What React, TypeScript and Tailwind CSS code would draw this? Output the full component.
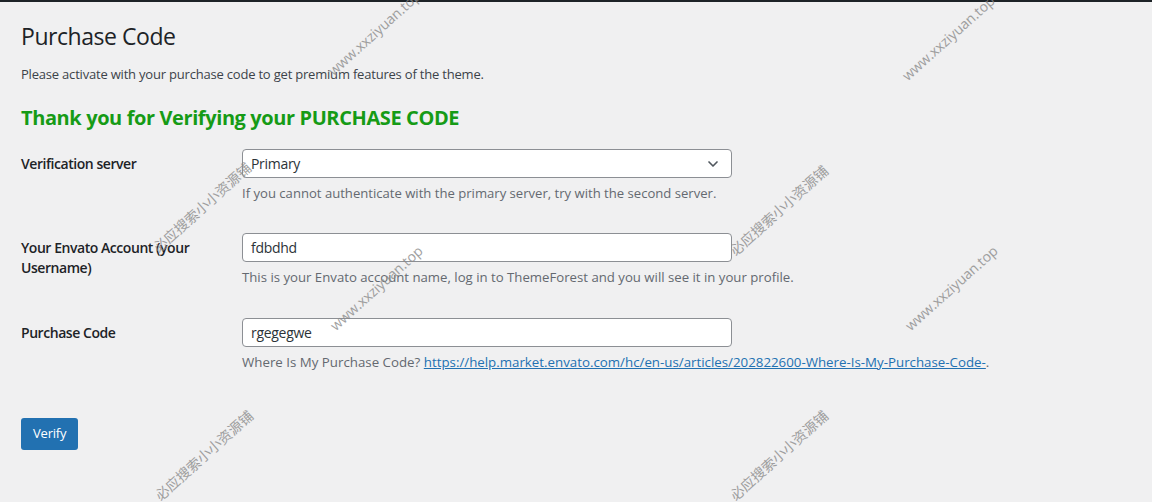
import { ChevronDown } from "lucide-react";

const marks = [
  { text: "www.xxziyuan.top", left: 330, top: 63 },
  { text: "www.xxziyuan.top", left: 904, top: 68 },
  { text: "必应搜索小小资源铺", left: 155, top: 240 },
  { text: "必应搜索小小资源铺", left: 732, top: 243 },
  { text: "www.xxziyuan.top", left: 332, top: 318 },
  { text: "www.xxziyuan.top", left: 907, top: 318 },
  { text: "必应搜索小小资源铺", left: 157, top: 488 },
  { text: "必应搜索小小资源铺", left: 732, top: 488 },
];

function Row({ label, children }: { label: React.ReactNode; children: React.ReactNode }) {
  return (
    <div className="grid grid-cols-[221px_490px] items-start">
      <div className="pt-[5px] pr-[20px] text-[14px] leading-[20px] font-semibold tracking-[-0.45px] text-[#1d2327]">
        {label}
      </div>
      <div>{children}</div>
    </div>
  );
}

function App() {
  return (
    <div
      className="relative w-[1152px] h-[502px] overflow-hidden bg-[#f0f0f1] text-[#3c434a]"
      style={{ fontFamily: '"Open Sans", "Noto Sans CJK SC", sans-serif' }}
    >
      <div className="h-[2px] bg-[#1d2327]" />

      <div className="px-[21px]">
        <h1 className="mt-[20px] text-[23px] leading-[29px] text-[#1d2327] tracking-[-0.45px]">Purchase Code</h1>
        <p className="mt-[14px] text-[13px] leading-[18px] tracking-[-0.2px]">
          Please activate with your purchase code to get premium features of the theme.
        </p>
        <h2 className="mt-[22px] text-[20px] leading-[26px] font-bold text-[#169b16] tracking-[-0.4px]">
          Thank you for Verifying your PURCHASE CODE
        </h2>

        <div className="mt-[18px] flex flex-col">
          <Row label="Verification server">
            <div className="flex h-[29px] items-center justify-between rounded-[4px] border border-[#8c8f94] bg-white pl-[8px] pr-[10px] text-[14px] tracking-[-0.3px] text-[#2c3338]">
              <span>Primary</span>
              <ChevronDown size={16} strokeWidth={2.5} className="text-[#50575e]" />
            </div>
            <p className="mt-[6px] whitespace-nowrap text-[13.1px] leading-[18px] text-[#646970]">
              If you cannot authenticate with the primary server, try with the second server.
            </p>
          </Row>

          <div className="mt-[31px]">
            <Row label={<>Your Envato Account (your<br />Username)</>}>
              <div className="flex h-[29px] items-center rounded-[4px] border border-[#8c8f94] bg-white px-[8px] text-[14px] tracking-[-0.3px] text-[#2c3338]">
                fdbdhd
              </div>
              <p className="mt-[6px] whitespace-nowrap text-[13.2px] leading-[18px] text-[#646970]">
                This is your Envato account name, log in to ThemeForest and you will see it in your profile.
              </p>
            </Row>
          </div>

          <div className="mt-[32px]">
            <Row label="Purchase Code">
              <div className="flex h-[29px] items-center rounded-[4px] border border-[#8c8f94] bg-white px-[8px] text-[14px] tracking-[-0.3px] text-[#2c3338]">
                rgegegwe
              </div>
              <p className="mt-[6px] whitespace-nowrap text-[13.3px] leading-[18px] text-[#646970]">
                Where Is My Purchase Code?{" "}
                <a href="#" className="text-[#2271b1] underline">
                  https://help.market.envato.com/hc/en-us/articles/202822600-Where-Is-My-Purchase-Code-
                </a>
                .
              </p>
            </Row>
          </div>

          <div className="mt-[47px]">
            <button className="h-[32px] rounded-[3px] bg-[#2271b1] px-[12px] text-[13px] tracking-[-0.2px] text-white">
              Verify
            </button>
          </div>
        </div>
      </div>

      {marks.map((m, i) => (
        <div
          key={i}
          className="pointer-events-none absolute origin-left -rotate-[42deg] whitespace-nowrap text-[14px] leading-[19px] text-[#8a8a8a] opacity-80"
          style={{ left: m.left, top: m.top }}
        >
          {m.text}
        </div>
      ))}
    </div>
  );
}

export default App;
